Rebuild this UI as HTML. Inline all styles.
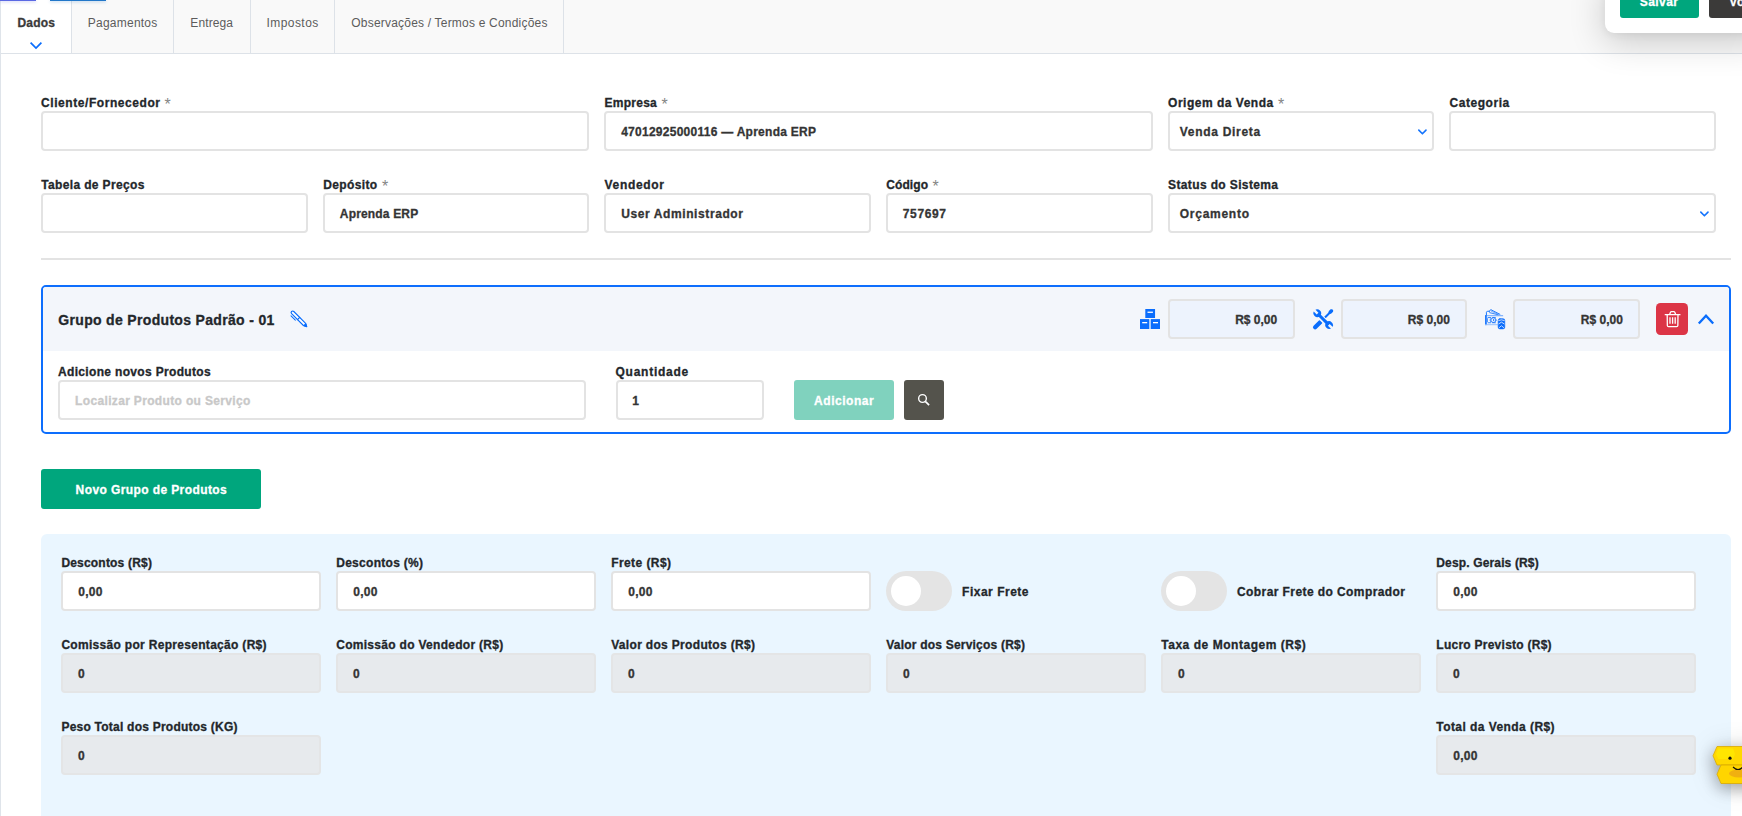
<!DOCTYPE html>
<html lang="pt-BR"><head><meta charset="utf-8"><title>Venda</title>
<style>
html,body{margin:0;padding:0;}
body{width:1742px;height:816px;overflow:hidden;background:#fff;position:relative;font-family:"Liberation Sans",sans-serif;}
.a{position:absolute;box-sizing:border-box;}
.t{position:absolute;white-space:pre;line-height:16px;font-family:"Liberation Sans",sans-serif;}
.in{position:absolute;box-sizing:border-box;height:40px;border:2px solid #e3e3e3;border-radius:4px;background:#fff;}
.dis{position:absolute;box-sizing:border-box;height:40px;border:2px solid #e4e5e6;border-radius:4px;background:#e7eaed;}
.sm{position:absolute;box-sizing:border-box;height:40px;border:2px solid #e3e3e3;border-radius:4px;background:#edf3fd;}
.sep{position:absolute;top:0;width:1px;height:53px;background:#dde2e8;}
.tog{position:absolute;box-sizing:border-box;width:66px;height:40px;border-radius:20px;background:#e4e4e4;}
.tog i{position:absolute;left:5px;top:5px;width:30px;height:30px;border-radius:50%;background:#fff;}
svg{position:absolute;overflow:visible;}

</style></head><body>
<!-- tab bar -->
<div class="a" style="left:0;top:0;width:1742px;height:54px;background:#f9f9f9;border-bottom:1px solid #dde2e8;"></div>
<div class="a" style="left:1px;top:0;width:70px;height:53px;background:#fff;"></div>
<div class="a" style="left:0;top:0;width:1px;height:816px;background:#dfe4ea;"></div>
<div class="sep" style="left:71px"></div>
<div class="sep" style="left:173px"></div>
<div class="sep" style="left:250px"></div>
<div class="sep" style="left:334px"></div>
<div class="sep" style="left:563px"></div>
<div class="a" style="left:0;top:0;width:36px;height:1px;background:#5b69e3;box-shadow:0 1px 3px rgba(91,105,227,.45);"></div>
<div class="a" style="left:50px;top:0;width:56px;height:1px;background:#2277c9;box-shadow:0 1px 3px rgba(34,119,201,.45);"></div>
<svg style="left:30px;top:42px" width="12" height="7" viewBox="0 0 12 7"><path d="M0.6 0.7 L6 6.1 L11.4 0.7" fill="none" stroke="#0a6dfc" stroke-width="1.7"/></svg>

<!-- top right floating panel -->
<div class="a" style="left:1605px;top:-20px;width:160px;height:53px;background:#fff;border-radius:0 0 0 9px;box-shadow:0 8px 36px rgba(0,0,0,.2), 0 2px 8px rgba(0,0,0,.06);"></div>
<div class="a" style="left:1620px;top:-22px;width:79px;height:40px;background:#00a67d;border-radius:3px;"></div>
<div class="a" style="left:1709px;top:-22px;width:79px;height:40px;background:#3b3a39;border-radius:3px;"></div>

<!-- row 1 -->
<div class="in" style="left:41px;top:111px;width:548px;"></div>
<div class="in" style="left:604px;top:111px;width:549px;"></div>
<div class="in" style="left:1168px;top:111px;width:266px;"></div>
<div class="in" style="left:1449px;top:111px;width:267px;"></div>
<svg style="left:1418px;top:129px" width="9" height="6" viewBox="0 0 9 6"><path d="M0.8 1.1 L4.4 4.8 L8 1.1" fill="none" stroke="#1574fc" stroke-width="1.6" stroke-linecap="round" stroke-linejoin="round"/></svg>
<!-- row 2 -->
<div class="in" style="left:41px;top:193px;width:267px;"></div>
<div class="in" style="left:323px;top:193px;width:266px;"></div>
<div class="in" style="left:604px;top:193px;width:267px;"></div>
<div class="in" style="left:886px;top:193px;width:267px;"></div>
<div class="in" style="left:1168px;top:193px;width:548px;"></div>
<svg style="left:1700px;top:211px" width="9" height="6" viewBox="0 0 9 6"><path d="M0.8 1.1 L4.4 4.8 L8 1.1" fill="none" stroke="#1574fc" stroke-width="1.6" stroke-linecap="round" stroke-linejoin="round"/></svg>

<!-- hr -->
<div class="a" style="left:41px;top:258px;width:1690px;height:2px;background:#e3e3e3;"></div>

<!-- group -->
<div class="a" style="left:41px;top:285px;width:1690px;height:149px;border:2px solid #0d6efd;border-radius:5px;background:#fff;overflow:hidden;">
  <div class="a" style="left:0;top:0;width:1686px;height:64px;background:#f3f6fb;"></div>
</div>
<!-- pen icon -->
<svg style="left:289px;top:309px" width="20" height="20" viewBox="0 0 20 20">
 <g transform="translate(10 9.9) rotate(45)" stroke="#0a6dfc" stroke-width="1.1" stroke-linejoin="round" stroke-linecap="round">
  <path d="M-8.9 -1.55 H7.8 L10.8 0 L7.8 1.55 H-8.9 A1.55 1.55 0 0 1 -8.9 -1.55z" fill="#fff"/>
  <path d="M8.2 -1.3 L10.9 0 L8.2 1.3z" fill="#0a6dfc"/>
  <path d="M-0.5 -1.55 V1.55" fill="none" stroke-width="1.2"/>
  <path d="M-7.8 3.5 H-1.7" fill="none" stroke-width="1"/>
 </g>
</svg>
<!-- boxes icon -->
<svg style="left:1140px;top:308.9px" width="20" height="20" viewBox="0 0 20 20" fill="#0a6dfc">
 <rect x="9" y="10.2" width="2" height="9.8" fill="#b3d2fb"/>
 <rect x="5.3" y="0" width="9.75" height="9"/><rect x="0" y="10.1" width="9.05" height="9.9"/><rect x="10.95" y="10.1" width="9.05" height="9.9"/>
 <rect x="7.5" y="2.6" width="5.4" height="1.3" fill="#fff"/><rect x="2.2" y="13" width="5" height="1.3" fill="#fff"/><rect x="13" y="13" width="5" height="1.3" fill="#fff"/>
</svg>
<div class="sm" style="left:1168px;top:299px;width:127px;"></div>
<!-- tools icon -->
<svg style="left:1312.8px;top:308.7px" width="20.4" height="20.4" viewBox="0 0 20 20">
 <g transform="rotate(-45 10 10)" fill="#0a6dfc">
  <path d="M-1.2 7.9 H6.2 Q6.9 7.9 6.9 8.6 V11.4 Q6.9 12.1 6.2 12.1 H-1.2 A2.1 2.1 0 0 1 -1.2 7.9z"/>
  <rect x="12.4" y="9" width="7" height="2"/>
  <path d="M18.3 8.9 L19.6 8.3 H22 L23.2 9.3 V10.7 L22 11.7 H19.6 L18.3 11.1z"/>
 </g>
 <g transform="rotate(45 10 10)">
  <rect x="3" y="7.6" width="14" height="4.8" fill="#f3f6fb"/>
  <rect x="1.4" y="8.5" width="17.2" height="3" fill="#0a6dfc"/>
  <circle cx="1.8" cy="10" r="3.7" fill="#0a6dfc"/><circle cx="18.2" cy="10" r="3.7" fill="#0a6dfc"/>
  <rect x="-3.2" y="8.8" width="5.4" height="2.4" fill="#f3f6fb"/>
  <rect x="17.8" y="8.8" width="5.4" height="2.4" fill="#f3f6fb"/>
 </g>
</svg>
<div class="sm" style="left:1341px;top:299px;width:126px;"></div>
<!-- money icon -->
<svg style="left:1484.8px;top:308.9px" width="20.4" height="20.4" viewBox="0 0 20 20" fill="none" stroke="#0a6dfc" stroke-width="1" stroke-linejoin="round" stroke-linecap="round">
 <path d="M1.4 6 V3.2 Q1.5 2.4 2.4 2.3 L4.2 2.1" stroke-width="0.9"/>
 <path d="M4.1 2.6 L5.6 0.6 L14.6 5.2" stroke-width="0.9"/>
 <path d="M4.6 3.6 L12.6 5.6" stroke-width="0.8"/>
 <path d="M6.4 2.3 L13.4 5.3" stroke-width="0.7" stroke="#3d8bfd"/>
 <path d="M0.4 6.6 H17.4" stroke="#5b9dfd" stroke-width="0.9"/>
 <path d="M0.9 6.8 V15.2" stroke-width="1.6"/>
 <path d="M0.4 15.4 H12.2" stroke="#8dbbfd" stroke-width="0.9"/>
 <path d="M3 8.4 H5.6 M7.4 8.4 H10.2 M3 13.5 H5.6 M7.4 13.5 H10.2" stroke-width="0.8"/>
 <path d="M2.4 9.4 V12.4" stroke-width="0.7"/>
 <ellipse cx="8.3" cy="10.9" rx="2.5" ry="2.3" stroke-width="0.8"/><ellipse cx="8.5" cy="10.9" rx="0.6" ry="1" fill="#0a6dfc" stroke="none"/>
 <path d="M5.3 9.5 Q4.5 10.9 5.3 12.3" stroke-width="0.7"/>
 <rect x="12.9" y="9.5" width="6.5" height="10" rx="1.7" fill="#0a6dfc" stroke="#0a6dfc" stroke-width="0.6"/>
 <path d="M13.5 11.2 Q16.1 9.9 18.8 11.2" stroke="#f3f6fb" stroke-width="0.8"/>
 <path d="M13.6 14.5 L16.15 12.9 L18.7 14.5" stroke="#dfeafd" stroke-width="0.9"/>
 <path d="M14 18.2 L16.15 16.4 L18.3 18.2" stroke="#cfe0fd" stroke-width="0.9"/>
</svg>
<div class="sm" style="left:1513px;top:299px;width:127px;"></div>
<!-- trash -->
<div class="a" style="left:1656px;top:303px;width:32px;height:32px;background:#dc3546;border-radius:4.5px;"></div>
<svg style="left:1664.5px;top:311px" width="15.2" height="16.4" viewBox="0 0 15.2 16.4" fill="none" stroke="#fff" stroke-width="1.3" stroke-linejoin="round">
 <path d="M0.2 3.7 H15 " stroke-linecap="round" stroke-width="1.2"/>
 <path d="M4.6 3.5 L5.5 1.3 Q5.8 0.7 6.5 0.7 H8.8 Q9.5 0.7 9.8 1.3 L10.7 3.5"/>
 <path d="M2.2 4 L2.35 14.5 Q2.4 15.7 3.6 15.7 H11.6 Q12.8 15.7 12.85 14.5 L13 4"/>
 <path d="M5 6.2 V12.8 M7.6 6.2 V12.8 M10.2 6.2 V12.8" stroke-width="1.3"/>
</svg>
<!-- chevron up -->
<svg style="left:1698px;top:313.6px" width="16" height="11" viewBox="0 0 16 11"><path d="M0.8 9.6 L8 1.7 L15.2 9.6" fill="none" stroke="#0a6dfc" stroke-width="2.3"/></svg>

<div class="in" style="left:58px;top:380px;width:528px;"></div>
<div class="in" style="left:616px;top:380px;width:148px;"></div>
<div class="a" style="left:794px;top:380px;width:100px;height:40px;background:#80d2be;border-radius:3px;"></div>
<div class="a" style="left:904px;top:380px;width:40px;height:40px;background:#54534c;border-radius:3px;"></div>
<svg style="left:917px;top:393px" width="14" height="14" viewBox="0 0 14 14" fill="none" stroke="#fff"><circle cx="5.5" cy="5.5" r="3.85" stroke-width="1.4"/><path d="M8.3 8.3 L12.1 12.1" stroke-width="1.7"/></svg>

<!-- new group button -->
<div class="a" style="left:41px;top:469px;width:220px;height:40px;background:#00a67d;border-radius:3px;"></div>

<!-- bottom panel -->
<div class="a" style="left:41px;top:534px;width:1690px;height:300px;background:#eaf6ff;border-radius:6px;"></div>
<div class="in" style="left:61px;top:571px;width:260px;"></div>
<div class="in" style="left:336px;top:571px;width:260px;"></div>
<div class="in" style="left:611px;top:571px;width:260px;"></div>
<div class="tog" style="left:886px;top:571px;"><i></i></div>
<div class="tog" style="left:1161px;top:571px;"><i></i></div>
<div class="in" style="left:1436px;top:571px;width:260px;"></div>

<div class="dis" style="left:61px;top:653px;width:260px;"></div>
<div class="dis" style="left:336px;top:653px;width:260px;"></div>
<div class="dis" style="left:611px;top:653px;width:260px;"></div>
<div class="dis" style="left:886px;top:653px;width:260px;"></div>
<div class="dis" style="left:1161px;top:653px;width:260px;"></div>
<div class="dis" style="left:1436px;top:653px;width:260px;"></div>
<div class="dis" style="left:61px;top:735px;width:260px;"></div>
<div class="dis" style="left:1436px;top:735px;width:260px;"></div>

<!-- yellow helper widget -->
<div class="a" style="left:1712px;top:746px;width:60px;height:38px;filter:drop-shadow(-1px 5px 8px rgba(0,0,0,.3)) drop-shadow(0 0 12px rgba(0,0,0,.12));">
<svg style="left:0;top:0" width="60" height="38" viewBox="0 0 60 38">
 <path d="M5 0.5 H60 V19 H5 L1 9.8z" fill="#ffd800" stroke="#d9a800" stroke-width="0.8"/>
 <path d="M9 19 H60 V37.5 H9 L5 28.2z" fill="#ffd500" stroke="#d9a800" stroke-width="0.8"/>
 <path d="M6.5 2.5 H21 L23 8 L21 13 H6.5 L4 8z" fill="#ffe600"/>
 <ellipse cx="27" cy="27.5" rx="10" ry="4" fill="#f0b010"/>
 <circle cx="18" cy="12.2" r="1.6" fill="#111"/>
 <path d="M21 21 q5 5 10 0" fill="none" stroke="#111" stroke-width="1.1"/>
</svg></div>

<span class="t" style="left:17.40px;top:14.84px;font-size:12px;font-weight:700;color:#3a3a3a;-webkit-text-stroke:0.3px #3a3a3a;letter-spacing:0.228px;">Dados</span>
<span class="t" style="left:87.80px;top:14.84px;font-size:12px;font-weight:400;color:#5c5c5c;letter-spacing:0.234px;">Pagamentos</span>
<span class="t" style="left:190.30px;top:14.84px;font-size:12px;font-weight:400;color:#5c5c5c;letter-spacing:0.111px;">Entrega</span>
<span class="t" style="left:266.40px;top:14.84px;font-size:12px;font-weight:400;color:#5c5c5c;letter-spacing:0.459px;">Impostos</span>
<span class="t" style="left:351.30px;top:14.84px;font-size:12px;font-weight:400;color:#5c5c5c;letter-spacing:0.201px;">Observações / Termos e Condições</span>
<span class="t" style="left:1639.80px;top:-6.16px;font-size:12px;font-weight:700;color:#ffffff;-webkit-text-stroke:0.3px #ffffff;letter-spacing:0.414px;">Salvar</span>
<span class="t" style="left:1729.20px;top:-6.16px;font-size:12px;font-weight:700;color:#ffffff;-webkit-text-stroke:0.3px #ffffff;letter-spacing:0.735px;">Voltar</span>
<span class="t" style="left:41.00px;top:94.84px;font-size:12px;font-weight:700;color:#23272b;-webkit-text-stroke:0.3px #23272b;letter-spacing:0.567px;">Cliente/Fornecedor</span>
<span class="t" style="left:164.40px;top:96.96px;font-size:16px;font-weight:400;color:#858585;letter-spacing:0.000px;">*</span>
<span class="t" style="left:604.60px;top:94.84px;font-size:12px;font-weight:700;color:#23272b;-webkit-text-stroke:0.3px #23272b;letter-spacing:0.249px;">Empresa</span>
<span class="t" style="left:661.40px;top:96.96px;font-size:16px;font-weight:400;color:#858585;letter-spacing:0.000px;">*</span>
<span class="t" style="left:1168.10px;top:94.84px;font-size:12px;font-weight:700;color:#23272b;-webkit-text-stroke:0.3px #23272b;letter-spacing:0.504px;">Origem da Venda</span>
<span class="t" style="left:1277.90px;top:96.96px;font-size:16px;font-weight:400;color:#858585;letter-spacing:0.000px;">*</span>
<span class="t" style="left:1449.50px;top:94.84px;font-size:12px;font-weight:700;color:#23272b;-webkit-text-stroke:0.3px #23272b;letter-spacing:0.543px;">Categoria</span>
<span class="t" style="left:621.20px;top:123.84px;font-size:12px;font-weight:700;color:#343434;-webkit-text-stroke:0.3px #343434;letter-spacing:0.263px;">47012925000116 — Aprenda ERP</span>
<span class="t" style="left:1179.80px;top:123.84px;font-size:12px;font-weight:700;color:#343434;-webkit-text-stroke:0.3px #343434;letter-spacing:0.700px;">Venda Direta</span>
<span class="t" style="left:41.20px;top:176.84px;font-size:12px;font-weight:700;color:#23272b;-webkit-text-stroke:0.3px #23272b;letter-spacing:0.358px;">Tabela de Preços</span>
<span class="t" style="left:323.30px;top:176.84px;font-size:12px;font-weight:700;color:#23272b;-webkit-text-stroke:0.3px #23272b;letter-spacing:0.365px;">Depósito</span>
<span class="t" style="left:381.90px;top:178.96px;font-size:16px;font-weight:400;color:#858585;letter-spacing:0.000px;">*</span>
<span class="t" style="left:604.60px;top:176.84px;font-size:12px;font-weight:700;color:#23272b;-webkit-text-stroke:0.3px #23272b;letter-spacing:0.673px;">Vendedor</span>
<span class="t" style="left:886.30px;top:176.84px;font-size:12px;font-weight:700;color:#23272b;-webkit-text-stroke:0.3px #23272b;letter-spacing:0.074px;">Código</span>
<span class="t" style="left:932.40px;top:178.96px;font-size:16px;font-weight:400;color:#858585;letter-spacing:0.000px;">*</span>
<span class="t" style="left:1168.10px;top:176.84px;font-size:12px;font-weight:700;color:#23272b;-webkit-text-stroke:0.3px #23272b;letter-spacing:0.367px;">Status do Sistema</span>
<span class="t" style="left:339.80px;top:205.84px;font-size:12px;font-weight:700;color:#343434;-webkit-text-stroke:0.3px #343434;letter-spacing:0.171px;">Aprenda ERP</span>
<span class="t" style="left:621.20px;top:205.84px;font-size:12px;font-weight:700;color:#343434;-webkit-text-stroke:0.3px #343434;letter-spacing:0.600px;">User Administrador</span>
<span class="t" style="left:902.80px;top:205.84px;font-size:12px;font-weight:700;color:#343434;-webkit-text-stroke:0.3px #343434;letter-spacing:0.631px;">757697</span>
<span class="t" style="left:1179.80px;top:205.84px;font-size:12px;font-weight:700;color:#343434;-webkit-text-stroke:0.3px #343434;letter-spacing:0.730px;">Orçamento</span>
<span class="t" style="left:58.30px;top:312.15px;font-size:14px;font-weight:700;color:#23272b;-webkit-text-stroke:0.3px #23272b;letter-spacing:0.324px;">Grupo de Produtos Padrão - 01</span>
<span class="t" style="left:1235.20px;top:311.84px;font-size:12px;font-weight:700;color:#343434;-webkit-text-stroke:0.3px #343434;letter-spacing:-0.022px;">R$ 0,00</span>
<span class="t" style="left:1407.80px;top:311.84px;font-size:12px;font-weight:700;color:#343434;-webkit-text-stroke:0.3px #343434;letter-spacing:0.028px;">R$ 0,00</span>
<span class="t" style="left:1580.80px;top:311.84px;font-size:12px;font-weight:700;color:#343434;-webkit-text-stroke:0.3px #343434;letter-spacing:0.028px;">R$ 0,00</span>
<span class="t" style="left:58.00px;top:363.84px;font-size:12px;font-weight:700;color:#23272b;-webkit-text-stroke:0.3px #23272b;letter-spacing:0.334px;">Adicione novos Produtos</span>
<span class="t" style="left:75.10px;top:392.84px;font-size:12px;font-weight:700;color:#c8c8c8;-webkit-text-stroke:0.3px #c8c8c8;letter-spacing:0.340px;">Localizar Produto ou Serviço</span>
<span class="t" style="left:615.50px;top:363.84px;font-size:12px;font-weight:700;color:#23272b;-webkit-text-stroke:0.3px #23272b;letter-spacing:0.754px;">Quantidade</span>
<span class="t" style="left:632.30px;top:392.84px;font-size:12px;font-weight:700;color:#343434;-webkit-text-stroke:0.3px #343434;letter-spacing:0.000px;">1</span>
<span class="t" style="left:814.10px;top:392.84px;font-size:12px;font-weight:700;color:#ffffff;-webkit-text-stroke:0.3px #ffffff;letter-spacing:0.520px;">Adicionar</span>
<span class="t" style="left:75.60px;top:481.84px;font-size:12px;font-weight:700;color:#ffffff;-webkit-text-stroke:0.3px #ffffff;letter-spacing:0.401px;">Novo Grupo de Produtos</span>
<span class="t" style="left:61.40px;top:554.84px;font-size:12px;font-weight:700;color:#23272b;-webkit-text-stroke:0.3px #23272b;letter-spacing:0.191px;">Descontos (R$)</span>
<span class="t" style="left:336.20px;top:554.84px;font-size:12px;font-weight:700;color:#23272b;-webkit-text-stroke:0.3px #23272b;letter-spacing:0.288px;">Descontos (%)</span>
<span class="t" style="left:611.20px;top:554.84px;font-size:12px;font-weight:700;color:#23272b;-webkit-text-stroke:0.3px #23272b;letter-spacing:0.420px;">Frete (R$)</span>
<span class="t" style="left:1436.30px;top:554.84px;font-size:12px;font-weight:700;color:#23272b;-webkit-text-stroke:0.3px #23272b;letter-spacing:0.147px;">Desp. Gerais (R$)</span>
<span class="t" style="left:78.20px;top:583.84px;font-size:12px;font-weight:700;color:#343434;-webkit-text-stroke:0.3px #343434;letter-spacing:0.314px;">0,00</span>
<span class="t" style="left:353.20px;top:583.84px;font-size:12px;font-weight:700;color:#343434;-webkit-text-stroke:0.3px #343434;letter-spacing:0.314px;">0,00</span>
<span class="t" style="left:628.20px;top:583.84px;font-size:12px;font-weight:700;color:#343434;-webkit-text-stroke:0.3px #343434;letter-spacing:0.314px;">0,00</span>
<span class="t" style="left:1453.20px;top:583.84px;font-size:12px;font-weight:700;color:#343434;-webkit-text-stroke:0.3px #343434;letter-spacing:0.314px;">0,00</span>
<span class="t" style="left:962.10px;top:583.84px;font-size:12px;font-weight:700;color:#23272b;-webkit-text-stroke:0.3px #23272b;letter-spacing:0.504px;">Fixar Frete</span>
<span class="t" style="left:1237.00px;top:583.84px;font-size:12px;font-weight:700;color:#23272b;-webkit-text-stroke:0.3px #23272b;letter-spacing:0.416px;">Cobrar Frete do Comprador</span>
<span class="t" style="left:61.40px;top:636.84px;font-size:12px;font-weight:700;color:#23272b;-webkit-text-stroke:0.3px #23272b;letter-spacing:0.305px;">Comissão por Representação (R$)</span>
<span class="t" style="left:336.20px;top:636.84px;font-size:12px;font-weight:700;color:#23272b;-webkit-text-stroke:0.3px #23272b;letter-spacing:0.295px;">Comissão do Vendedor (R$)</span>
<span class="t" style="left:611.20px;top:636.84px;font-size:12px;font-weight:700;color:#23272b;-webkit-text-stroke:0.3px #23272b;letter-spacing:0.323px;">Valor dos Produtos (R$)</span>
<span class="t" style="left:886.20px;top:636.84px;font-size:12px;font-weight:700;color:#23272b;-webkit-text-stroke:0.3px #23272b;letter-spacing:0.215px;">Valor dos Serviços (R$)</span>
<span class="t" style="left:1161.20px;top:636.84px;font-size:12px;font-weight:700;color:#23272b;-webkit-text-stroke:0.3px #23272b;letter-spacing:0.539px;">Taxa de Montagem (R$)</span>
<span class="t" style="left:1436.30px;top:636.84px;font-size:12px;font-weight:700;color:#23272b;-webkit-text-stroke:0.3px #23272b;letter-spacing:0.255px;">Lucro Previsto (R$)</span>
<span class="t" style="left:78.00px;top:665.84px;font-size:12px;font-weight:700;color:#343434;-webkit-text-stroke:0.3px #343434;letter-spacing:0.000px;">0</span>
<span class="t" style="left:353.00px;top:665.84px;font-size:12px;font-weight:700;color:#343434;-webkit-text-stroke:0.3px #343434;letter-spacing:0.000px;">0</span>
<span class="t" style="left:628.00px;top:665.84px;font-size:12px;font-weight:700;color:#343434;-webkit-text-stroke:0.3px #343434;letter-spacing:0.000px;">0</span>
<span class="t" style="left:903.00px;top:665.84px;font-size:12px;font-weight:700;color:#343434;-webkit-text-stroke:0.3px #343434;letter-spacing:0.000px;">0</span>
<span class="t" style="left:1178.00px;top:665.84px;font-size:12px;font-weight:700;color:#343434;-webkit-text-stroke:0.3px #343434;letter-spacing:0.000px;">0</span>
<span class="t" style="left:1453.00px;top:665.84px;font-size:12px;font-weight:700;color:#343434;-webkit-text-stroke:0.3px #343434;letter-spacing:0.000px;">0</span>
<span class="t" style="left:61.40px;top:718.84px;font-size:12px;font-weight:700;color:#23272b;-webkit-text-stroke:0.3px #23272b;letter-spacing:0.234px;">Peso Total dos Produtos (KG)</span>
<span class="t" style="left:1436.30px;top:718.84px;font-size:12px;font-weight:700;color:#23272b;-webkit-text-stroke:0.3px #23272b;letter-spacing:0.435px;">Total da Venda (R$)</span>
<span class="t" style="left:78.00px;top:747.84px;font-size:12px;font-weight:700;color:#343434;-webkit-text-stroke:0.3px #343434;letter-spacing:0.000px;">0</span>
<span class="t" style="left:1453.20px;top:747.84px;font-size:12px;font-weight:700;color:#343434;-webkit-text-stroke:0.3px #343434;letter-spacing:0.314px;">0,00</span>
</body></html>
